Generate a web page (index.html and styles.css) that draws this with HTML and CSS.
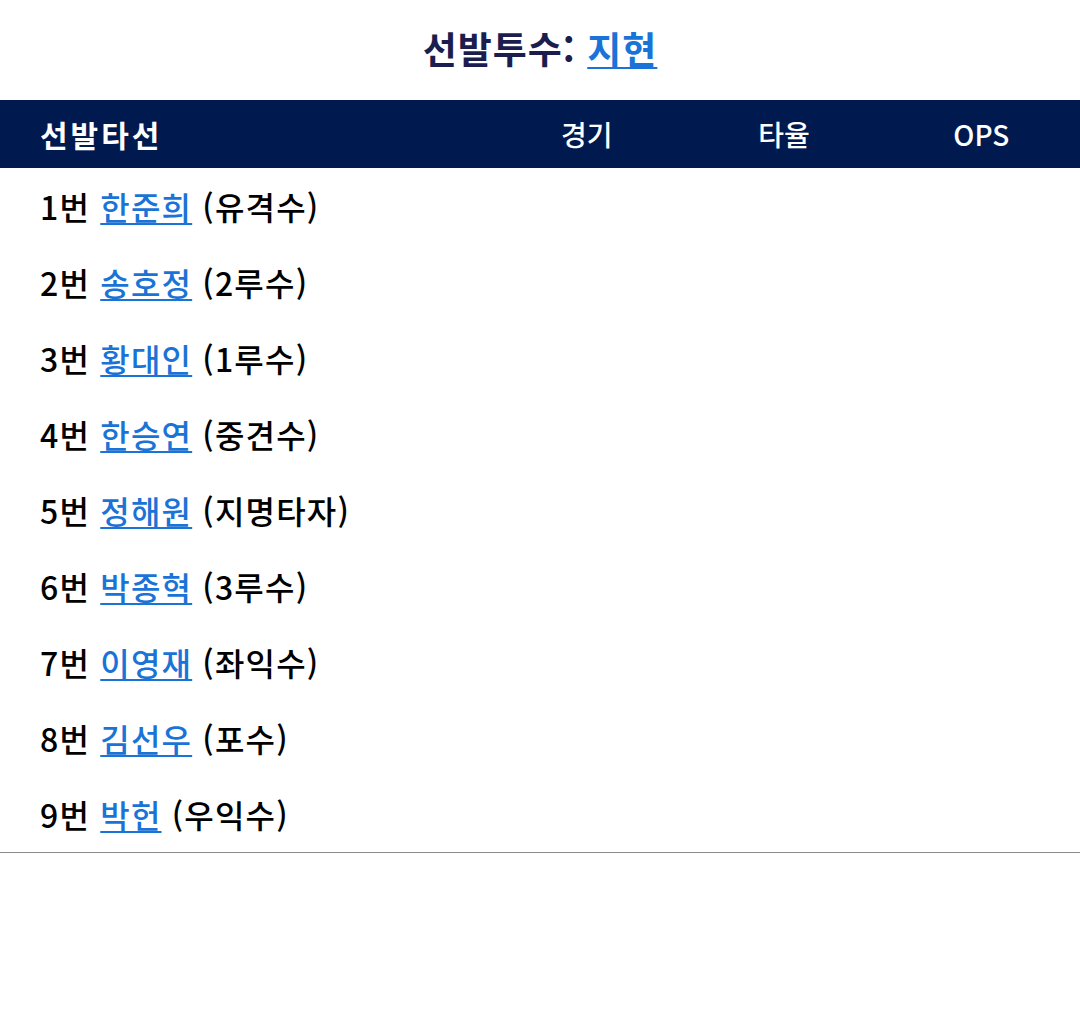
FILE: index.html
```html
<!DOCTYPE html>
<html lang="ko">
<head>
<meta charset="utf-8">
<link rel="stylesheet" href="styles.css">
</head>
<body>
<h2 class="title">선발투수: <a href="#" class="link">지현</a></h2>
<table class="lineup">
  <thead>
    <tr>
      <th class="col-name">선발타선</th>
      <th class="col-stat">경기</th>
      <th class="col-stat">타율</th>
      <th class="col-stat">OPS</th>
    </tr>
  </thead>
  <tbody>
    <tr><td colspan="4">1번 <a href="#" class="link">한준희</a> (유격수)</td></tr>
    <tr><td colspan="4">2번 <a href="#" class="link">송호정</a> (2루수)</td></tr>
    <tr><td colspan="4">3번 <a href="#" class="link">황대인</a> (1루수)</td></tr>
    <tr><td colspan="4">4번 <a href="#" class="link">한승연</a> (중견수)</td></tr>
    <tr><td colspan="4">5번 <a href="#" class="link">정해원</a> (지명타자)</td></tr>
    <tr><td colspan="4">6번 <a href="#" class="link">박종혁</a> (3루수)</td></tr>
    <tr><td colspan="4">7번 <a href="#" class="link">이영재</a> (좌익수)</td></tr>
    <tr><td colspan="4">8번 <a href="#" class="link">김선우</a> (포수)</td></tr>
    <tr class="last"><td colspan="4">9번 <a href="#" class="link">박헌</a> (우익수)</td></tr>
  </tbody>
</table>
</body>
</html>
```

FILE: styles.css
```css
html, body {
  margin: 0;
  padding: 0;
  background: #ffffff;
}
body {
  font-family: "Noto Sans CJK KR", "Noto Sans", sans-serif;
  color: #000;
}
.title {
  margin: 0;
  height: 100px;
  line-height: 96px;
  text-align: center;
  font-size: 37px;
  letter-spacing: 1px;
  font-weight: 700;
  color: #1b1d4e;
}
.link {
  color: #1a73d6;
  text-decoration: underline;
  text-underline-offset: 3px;
  text-decoration-thickness: 2px;
}
.lineup {
  width: 100%;
  border-collapse: collapse;
  table-layout: fixed;
}
.lineup thead tr {
  background: #001a4f;
  color: #ffffff;
}
.lineup th {
  height: 68px;
  padding: 0;
  font-size: 28px;
  font-weight: 700;
}
.col-name {
  width: 488px;
  text-align: left;
  padding-left: 40px !important;
  box-sizing: border-box;
  font-size: 30px !important;
  letter-spacing: 3px;
}
.col-stat {
  text-align: center;
  font-weight: 500 !important;
}
.lineup td {
  height: 76px;
  padding: 0 0 0 40px;
  font-size: 32px;
  letter-spacing: 1.2px;
  font-weight: 500;
  vertical-align: middle;
  line-height: 1;
}
.lineup tr.last td {
  border-bottom: 1px solid #8a8a8a;
}
```
